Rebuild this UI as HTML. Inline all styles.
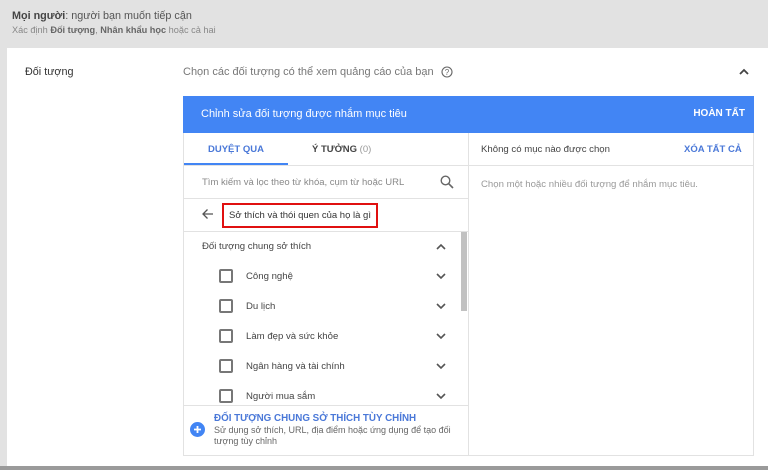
<!DOCTYPE html>
<html><head><meta charset="utf-8"><style>
*{box-sizing:border-box;margin:0;padding:0}
body{width:768px;height:470px;overflow:hidden;background:#e2e2e2;font-family:"Liberation Sans",Arial,sans-serif;position:relative;color:#333}
.a{position:absolute}
.card{left:7px;top:48px;width:761px;height:418px;background:#fff}
.bot{left:0;top:466px;width:768px;height:4px;background:#9a9a9a}
.panel{left:183px;top:96px;width:571px;height:360px;border:1px solid #e2e2e2;border-top:none;background:#fff}
.blue{left:183px;top:96px;width:571px;height:37px;background:#4285f4;color:#fff;font-size:11px}
.t{white-space:nowrap}
.chk{width:14px;height:14px;border:2px solid #777;border-radius:2px}
.row{font-size:9.6px;color:#444}
</style></head><body>
<div class="a t" style="left:12px;top:10px;font-size:10.8px;color:#555"><b style="color:#444">Mọi người</b>: người bạn muốn tiếp cận</div>
<div class="a t" style="left:12px;top:25px;font-size:9.2px;color:#888">Xác định <b style="color:#666">Đối tượng</b>, <b style="color:#666">Nhân khẩu học</b> hoặc cả hai</div>
<div class="a card"></div>
<div class="a bot"></div>
<div class="a t" style="left:25px;top:66px;font-size:10.8px;color:#333">Đối tượng</div>
<div class="a t" style="left:183px;top:66px;font-size:11px;color:#777">Chọn các đối tượng có thể xem quảng cáo của bạn</div>
<svg class="a" style="left:441px;top:66px" width="12" height="12" viewBox="0 0 12 12"><circle cx="6" cy="6" r="5" fill="none" stroke="#666" stroke-width="1.1"/><text x="6" y="9" font-size="8" text-anchor="middle" fill="#666" font-family="Liberation Sans">?</text></svg>
<svg class="a" style="left:739px;top:68px" width="10" height="7" viewBox="0 0 10 7"><path d="M1 6L5 2L9 6" fill="none" stroke="#444" stroke-width="1.8"/></svg>
<div class="a panel"></div>
<div class="a blue"><span class="a t" style="left:18px;top:12px">Chỉnh sửa đối tượng được nhắm mục tiêu</span><b class="a t" style="right:9px;top:12px;font-size:10px">HOÀN TẤT</b></div>
<div class="a" style="left:468px;top:133px;width:1px;height:322px;background:#e2e2e2"></div>
<div class="a" style="left:183px;top:165px;width:571px;height:1px;background:#e2e2e2"></div>
<div class="a" style="left:184px;top:163px;width:104px;height:2px;background:#4285f4"></div>
<div class="a t" style="left:208px;top:144px;font-size:9.5px;color:#4a78d8;font-weight:bold">DUYỆT QUA</div>
<div class="a t" style="left:312px;top:144px;font-size:9.5px;color:#444;font-weight:bold">Ý TƯỞNG <span style="color:#999;font-weight:normal">(0)</span></div>
<div class="a t" style="left:481px;top:144px;font-size:9.6px;color:#444">Không có mục nào được chọn</div>
<div class="a t" style="left:684px;top:144px;font-size:9.5px;color:#4a78d8;font-weight:bold">XÓA TẤT CẢ</div>
<div class="a t" style="left:481px;top:179px;font-size:9.6px;color:#999">Chọn một hoặc nhiều đối tượng để nhắm mục tiêu.</div>
<div class="a t" style="left:202px;top:177px;font-size:9.5px;color:#888">Tìm kiếm và lọc theo từ khóa, cụm từ hoặc URL</div>
<svg class="a" style="left:440px;top:175px" width="14" height="14" viewBox="0 0 14 14"><circle cx="5.5" cy="5.5" r="4.3" fill="none" stroke="#666" stroke-width="1.4"/><path d="M8.7 8.7L13 13" stroke="#666" stroke-width="1.6"/></svg>
<div class="a" style="left:183px;top:198px;width:285px;height:1px;background:#e2e2e2"></div>
<svg class="a" style="left:201px;top:208px" width="13" height="12" viewBox="0 0 13 12"><path d="M12 6H2M6.5 1.5L2 6L6.5 10.5" fill="none" stroke="#555" stroke-width="1.3"/></svg>
<div class="a" style="left:222px;top:203px;width:156px;height:25px;border:2px solid #e01010"></div>
<div class="a t" style="left:229px;top:210px;font-size:9.5px;color:#333">Sở thích và thói quen của họ là gì</div>
<div class="a" style="left:183px;top:231px;width:285px;height:1px;background:#e2e2e2"></div>
<div class="a" style="left:461px;top:232px;width:6px;height:79px;background:#c1c1c1"></div>
<div class="a t row" style="left:202px;top:241px">Đối tượng chung sở thích</div>
<svg class="a" style="left:436px;top:243px" width="10" height="7" viewBox="0 0 10 7"><path d="M1 6L5 2L9 6" fill="none" stroke="#555" stroke-width="1.6"/></svg>
<div class="a chk" style="left:219px;top:269px"></div><div class="a t row" style="left:246px;top:271px">Công nghệ</div>
<div class="a chk" style="left:219px;top:299px"></div><div class="a t row" style="left:246px;top:301px">Du lịch</div>
<div class="a chk" style="left:219px;top:329px"></div><div class="a t row" style="left:246px;top:331px">Làm đẹp và sức khỏe</div>
<div class="a chk" style="left:219px;top:359px"></div><div class="a t row" style="left:246px;top:361px">Ngân hàng và tài chính</div>
<div class="a chk" style="left:219px;top:389px"></div><div class="a t row" style="left:246px;top:391px">Người mua sắm</div>
<svg class="a" style="left:436px;top:273px" width="10" height="130" viewBox="0 0 10 130"><g fill="none" stroke="#555" stroke-width="1.6"><path d="M1 1L5 5L9 1"/><path d="M1 31L5 35L9 31"/><path d="M1 61L5 65L9 61"/><path d="M1 91L5 95L9 91"/><path d="M1 121L5 125L9 121"/></g></svg>
<div class="a" style="left:183px;top:405px;width:285px;height:1px;background:#e2e2e2"></div>
<svg class="a" style="left:190px;top:422px" width="15" height="15" viewBox="0 0 15 15"><circle cx="7.5" cy="7.5" r="7.5" fill="#4285f4"/><path d="M7.5 4V11M4 7.5H11" stroke="#fff" stroke-width="1.8"/></svg>
<div class="a t" style="left:214px;top:413px;font-size:9.8px;color:#4a78d8;font-weight:bold">ĐỐI TƯỢNG CHUNG SỞ THÍCH TÙY CHỈNH</div>
<div class="a" style="left:214px;top:425px;width:240px;font-size:9px;color:#666;line-height:11px">Sử dụng sở thích, URL, địa điểm hoặc ứng dụng để tạo đối tượng tùy chỉnh</div>
</body></html>
